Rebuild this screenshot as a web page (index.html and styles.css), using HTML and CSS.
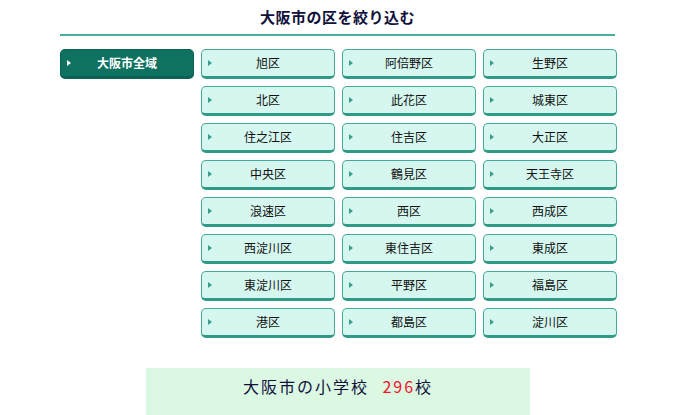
FILE: index.html
```html
<!DOCTYPE html>
<html lang="ja">
<head>
<meta charset="utf-8">
<link rel="stylesheet" href="styles.css">
</head>
<body>
<div class="wrap">
  <h2 class="title">大阪市の区を絞り込む</h2>
  <div class="filter">
    <a class="btn btn-all"><span class="arrow"></span>大阪市全域</a>
    <div class="grid">
      <a class="btn"><span class="arrow"></span>旭区</a>
      <a class="btn"><span class="arrow"></span>阿倍野区</a>
      <a class="btn"><span class="arrow"></span>生野区</a>
      <a class="btn"><span class="arrow"></span>北区</a>
      <a class="btn"><span class="arrow"></span>此花区</a>
      <a class="btn"><span class="arrow"></span>城東区</a>
      <a class="btn"><span class="arrow"></span>住之江区</a>
      <a class="btn"><span class="arrow"></span>住吉区</a>
      <a class="btn"><span class="arrow"></span>大正区</a>
      <a class="btn"><span class="arrow"></span>中央区</a>
      <a class="btn"><span class="arrow"></span>鶴見区</a>
      <a class="btn"><span class="arrow"></span>天王寺区</a>
      <a class="btn"><span class="arrow"></span>浪速区</a>
      <a class="btn"><span class="arrow"></span>西区</a>
      <a class="btn"><span class="arrow"></span>西成区</a>
      <a class="btn"><span class="arrow"></span>西淀川区</a>
      <a class="btn"><span class="arrow"></span>東住吉区</a>
      <a class="btn"><span class="arrow"></span>東成区</a>
      <a class="btn"><span class="arrow"></span>東淀川区</a>
      <a class="btn"><span class="arrow"></span>平野区</a>
      <a class="btn"><span class="arrow"></span>福島区</a>
      <a class="btn"><span class="arrow"></span>港区</a>
      <a class="btn"><span class="arrow"></span>都島区</a>
      <a class="btn"><span class="arrow"></span>淀川区</a>
    </div>
  </div>
</div>
<div class="count">大阪市の小学校 <span class="num">296</span>校</div>
</body>
</html>
```
FILE: styles.css
```css
* { box-sizing: border-box; }
html, body { margin: 0; padding: 0; background: #fff; }
body {
  font-family: "Noto Sans CJK JP", "Noto Sans", sans-serif;
  color: #111;
  width: 675px;
  height: 415px;
  overflow: hidden;
}
.wrap {
  margin-left: 60px;
  width: 555px;
}
.title {
  margin: 0;
  height: 36px;
  padding-top: 6px;
  font-size: 15px;
  line-height: 22px;
  letter-spacing: 0.5px;
  font-weight: bold;
  text-align: center;
  color: #10103a;
  border-bottom: 2px solid #4aae9d;
}
.filter {
  display: flex;
  gap: 7px;
  margin-top: 13px;
}
.grid {
  display: grid;
  flex-shrink: 0;
  grid-template-columns: repeat(3, 134px);
  column-gap: 7px;
  row-gap: 7px;
}
.btn {
  position: relative;
  display: flex;
  flex-shrink: 0;
  align-items: center;
  justify-content: center;
  height: 30px;
  width: 134px;
  background: #d5f7ef;
  border: 1px solid #45a898;
  border-bottom: 3px solid #2f9b86;
  border-radius: 5px;
  font-size: 12px;
  color: #111;
  padding-bottom: 1px;
}
.btn-all {
  background: #0f7160;
  border: 1px solid #0c6354;
  border-bottom: 3px solid #0c6354;
  color: #fff;
  font-weight: bold;
  font-size: 12px;
}
.arrow {
  position: absolute;
  left: 6px;
  top: 10px;
  width: 0;
  height: 0;
  border-top: 3px solid transparent;
  border-bottom: 3px solid transparent;
  border-left: 4px solid #3a9f8a;
}
.btn-all .arrow {
  border-left-color: #fff;
}
.count {
  margin: 30px 0 0 146px;
  width: 384px;
  height: 50px;
  padding-top: 6px;
  background: #dbf8e3;
  text-align: center;
  font-size: 16px;
  line-height: 24px;
  letter-spacing: 2px;
  color: #10103a;
}
.num {
  color: #f0142a;
  margin-left: 8px;
}
```
